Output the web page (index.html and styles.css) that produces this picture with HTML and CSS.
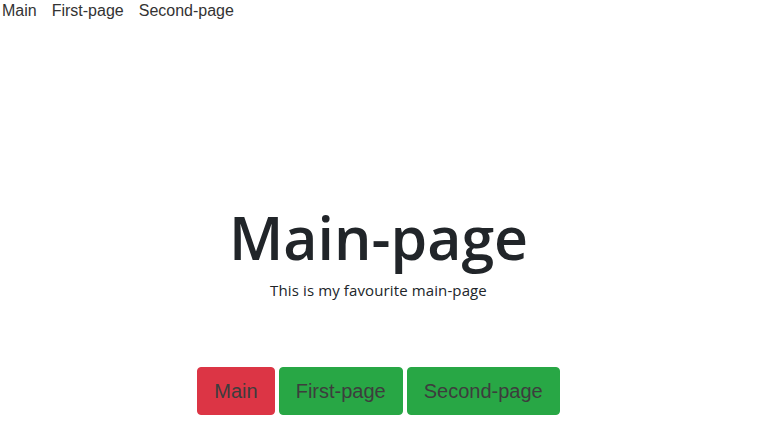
FILE: index.html
```html
<!DOCTYPE html>
<html>
<head>
<meta charset="utf-8">
<link rel="stylesheet" href="styles.css">
</head>
<body>
<nav class="nav">
  <a class="nav-link" href="#">Main</a>
  <a class="nav-link" href="#">First-page</a>
  <a class="nav-link" href="#">Second-page</a>
</nav>
<main class="hero">
  <h1 class="title">Main-page</h1>
  <p class="lead">This is my favourite main-page</p>
  <div class="buttons">
    <a class="btn btn-red" href="#">Main</a>
    <a class="btn btn-green" href="#">First-page</a>
    <a class="btn btn-green" href="#">Second-page</a>
  </div>
</main>
</body>
</html>
```
FILE: styles.css
```css
html, body {
  margin: 0;
  padding: 0;
  background: #fff;
}
body {
  font-family: "Liberation Sans", Arial, sans-serif;
  color: #212529;
}
.nav {
  display: flex;
  gap: 15px;
  padding: 0 0 0 2px;
  height: 22px;
  align-items: center;
}
.nav-link {
  font-size: 16px;
  color: #333;
  text-decoration: none;
  line-height: 20px;
}
.hero {
  display: flex;
  flex-direction: column;
  align-items: center;
  padding-top: 183px;
}
.title {
  font-family: "Open Sans", "Noto Sans", sans-serif;
  font-weight: 600;
  font-size: 59px;
  line-height: 64px;
  margin: 0;
  color: #212529;
  letter-spacing: 0;
}
.lead {
  font-family: "Open Sans", "Noto Sans", sans-serif;
  font-size: 15px;
  line-height: 22px;
  margin: 10px 0 0;
  color: #212529;
  letter-spacing: 0.12px;
}
.buttons {
  display: flex;
  gap: 4px;
  margin-top: 66px;
}
.btn {
  display: block;
  font-family: "Liberation Sans", Arial, sans-serif;
  font-size: 20px;
  line-height: 30px;
  padding: 8px 16px;
  border: 1px solid transparent;
  border-radius: 4px;
  color: #3d3d3d;
  text-decoration: none;
}
.btn-red {
  background: #dc3545;
  border-color: #dc3545;
}
.btn-green {
  background: #28a745;
  border-color: #28a745;
}
```
